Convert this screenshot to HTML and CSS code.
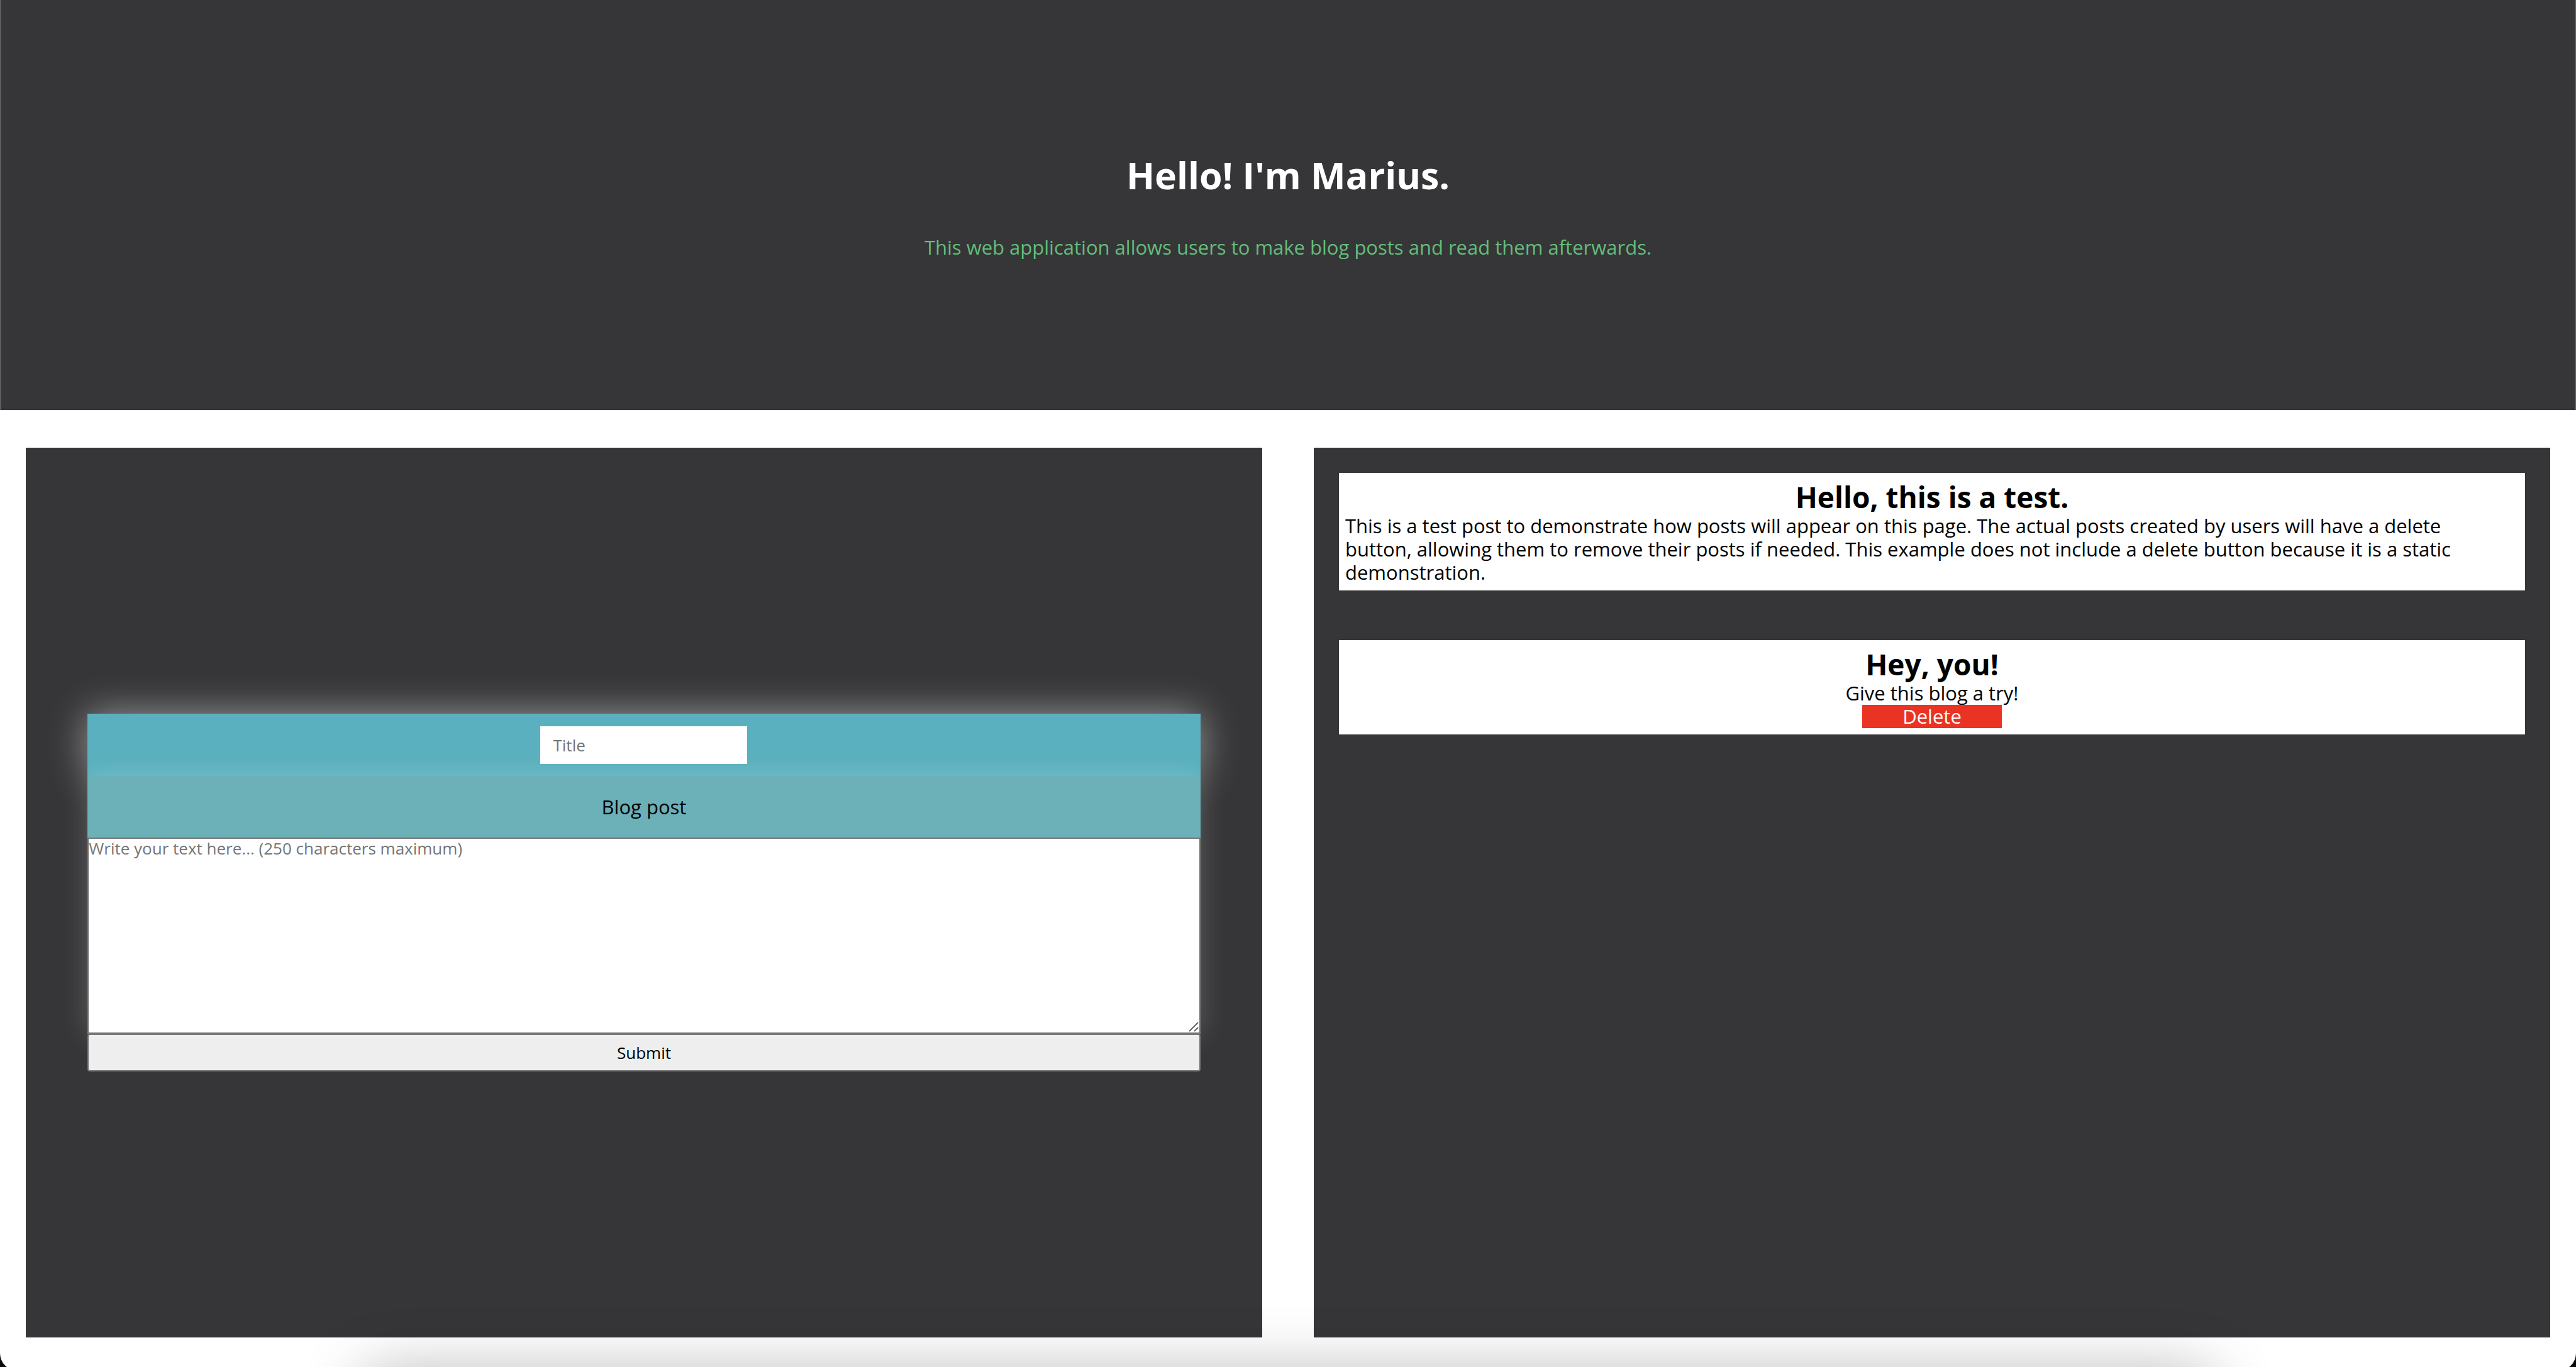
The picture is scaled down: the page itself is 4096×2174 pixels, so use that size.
FILE: index.html
```html
<!DOCTYPE html>
<html lang="en">
<head>
  <meta charset="utf-8">
  <meta name="viewport" content="width=device-width, initial-scale=1">
  <title>Marius' blog</title>
  <link rel="stylesheet" href="styles.css">
</head>
<body>
  <header class="hero">
    <h1 class="hero-title">Hello! I'm Marius.</h1>
    <p class="hero-text">This web application allows users to make blog posts and read them afterwards.</p>
  </header>

  <main class="columns">
    <section class="panel panel-form">
      <form class="post-form">
        <div class="title-row">
          <input class="title-input" type="text" name="title" placeholder="Title" aria-label="Title">
        </div>
        <div class="body-row">
          <label class="body-label" for="post-body">Blog post</label>
          <textarea class="body-input" id="post-body" name="body" maxlength="250" placeholder="Write your text here... (250 characters maximum)"></textarea>
          <svg class="grip" viewBox="0 0 16 16" aria-hidden="true"><path d="M1 15 15 1M9 15l6-6"/></svg>
        </div>
        <button class="submit" type="submit">Submit</button>
      </form>
    </section>

    <section class="panel panel-posts">
      <article class="post">
        <h2 class="post-title">Hello, this is a test.</h2>
        <p class="post-text">This is a test post to demonstrate how posts will appear on this page. The actual posts created by users will have a delete<br> button, allowing them to remove their posts if needed. This example does not include a delete button because it is a static<br> demonstration.</p>
      </article>
      <article class="post">
        <h2 class="post-title">Hey, you!</h2>
        <p class="post-text">Give this blog a try!</p>
        <button class="delete" type="button">Delete</button>
      </article>
    </section>
  </main>

  <div class="dock-shadow" aria-hidden="true"></div>
  <div class="window-corners" aria-hidden="true"></div>
</body>
</html>
```

FILE: styles.css
```css
* {
  box-sizing: border-box;
  margin: 0;
  padding: 0;
}

body {
  display: flex;
  flex-direction: column;
  min-height: 100vh;
  overflow-x: hidden;
  background: #fff;
  color: #000;
  font: 31px/37px "Trebuchet MS", "Open Sans", sans-serif;
}

input,
textarea,
button {
  font-family: inherit;
}

.hero {
  display: flex;
  flex-direction: column;
  align-items: center;
  justify-content: center;
  gap: 60px;
  min-height: 30vh;
  border: solid #5f5f60;
  border-width: 0 2px;
  background: #363638;
  text-align: center;
}

.hero-title {
  color: #fff;
  font-size: 59px;
  line-height: 74px;
}

.hero-text {
  color: #63bd7b;
}

.columns {
  display: grid;
  flex: 1;
  grid-template-columns: 1fr 1fr;
  gap: 2vw;
  padding: 60px 1vw 47px;
}

.panel {
  display: flex;
  flex-direction: column;
  background: #363638;
}

.panel-form {
  align-items: center;
  justify-content: center;
}

.post-form {
  display: flex;
  flex-direction: column;
  width: 90%;
}

.title-row {
  display: flex;
  justify-content: center;
  padding: 20px;
  background: #5ab0be;
  box-shadow: 0 0 60px rgba(255, 255, 255, 0.5);
}

.title-input {
  width: 329px;
  height: 60px;
  padding: 0 20px;
  border: 0;
  background: #fff;
  font-size: 26px;
}

.body-row {
  position: relative;
  display: flex;
  flex-direction: column;
  background: #6cb0b8;
  box-shadow: 0 0 40px rgba(255, 255, 255, 0.2);
}

.body-label {
  padding: 30px 0;
  text-align: center;
}

.body-input {
  height: 312px;
  border: 2px solid #767676;
  border-radius: 3px;
  background: #fff;
  font-size: 26px;
  line-height: 31px;
  resize: none;
}

.title-input::placeholder,
.body-input::placeholder {
  color: #757575;
}

.grip {
  position: absolute;
  right: 3px;
  bottom: 3px;
  width: 16px;
  height: 16px;
  fill: none;
  stroke: #666;
  stroke-width: 2;
}

.submit {
  position: relative;
  height: 60px;
  border: 2px solid #767676;
  border-radius: 4px;
  background: #eee;
  color: #000;
  font-size: 26px;
}

.panel-posts {
  gap: 79px;
  padding: 40px;
}

.post {
  display: flex;
  flex-direction: column;
  align-items: center;
  padding: 10px;
  background: #fff;
}

.post:first-child .post-text {
  align-self: stretch;
}

.post-title {
  font-size: 46px;
  line-height: 56px;
}

.delete {
  padding: 0 64px;
  border: 0;
  background: #eb3323;
  color: #fff;
  font-size: 31px;
  line-height: 37px;
}

/* soft shade rising from the bottom edge of the window */
.dock-shadow {
  position: fixed;
  top: 100%;
  right: 14%;
  left: 14%;
  height: 100px;
  margin-top: 10px;
  border-radius: 40px;
  box-shadow: 0 0 100px rgba(0, 0, 0, 0.3);
  pointer-events: none;
}

/* rounded lower corners of the window */
.window-corners {
  position: fixed;
  inset: 0 0 -6px;
  border-radius: 0 0 28px 28px;
  box-shadow: 0 0 0 28px #0a0a08;
  pointer-events: none;
}
```
